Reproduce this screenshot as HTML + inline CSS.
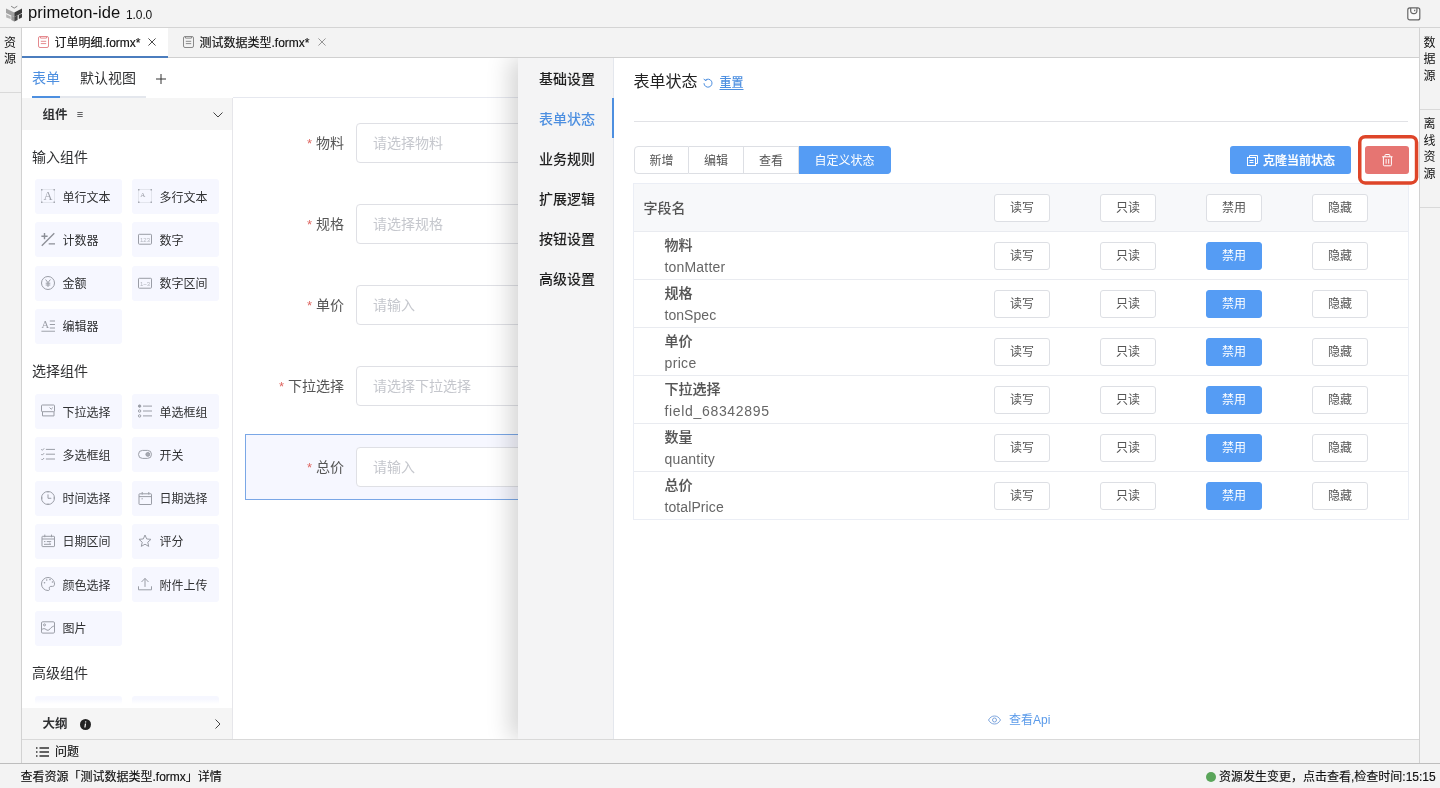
<!DOCTYPE html>
<html lang="zh-CN">
<head>
<meta charset="utf-8">
<title>primeton-ide</title>
<style>
*{box-sizing:border-box;margin:0;padding:0}
html,body{width:1440px;height:788px;overflow:hidden}
body{position:relative;background:#f3f3f3;font-family:"Liberation Sans","Noto Sans CJK SC",sans-serif;color:#000;font-size:12px}
.abs{position:absolute}
.t{position:absolute;white-space:nowrap;line-height:1}
svg{position:absolute;overflow:visible}
.k{-webkit-text-stroke:0.150px #111}
/* title bar */
#titlebar{left:0;top:0;width:1440px;height:28px;background:#f3f3f3;border-bottom:1px solid #d4d4d4}
/* side rails */
#lrail{left:0;top:28px;width:22px;height:736px;background:#f3f3f3;border-right:1px solid #d2d2d2}
#rrail{left:1419px;top:28px;width:21px;height:736px;background:#f3f3f3;border-left:1px solid #d2d2d2}
.vt{position:absolute;width:12px;font-size:12px;line-height:16.200px;text-align:center;color:#111}
/* tab bar */
#tabbar{left:22px;top:28px;width:1397px;height:30px;background:#f3f3f3;border-bottom:1px solid #d0d0d0}
#tab1{left:22px;top:28px;width:146px;height:30px;background:#fff;border-bottom:2px solid #4b7dbe}
/* editor */
#editor{left:22px;top:58px;width:1397px;height:681px;background:#fff}
#subtabs-line{left:32px;top:96px;width:114px;height:2px;background:#e4e7ed}
#subtabs-active{left:32px;top:96px;width:28px;height:2px;background:#4d8fe0}
#comp{left:22px;top:98px;width:211px;height:641px;background:#fff;border-right:1px solid #e6e6ea}
#comp-h{left:22px;top:98px;width:210px;height:32px;background:#f5f5f5}
#outline-h{left:22px;top:708px;width:210px;height:31px;background:#f5f5f5}
.grp{font-size:14px;color:#303133;left:32px}
.ci{position:absolute;width:87px;height:35px;background:#f6f7ff;border-radius:3px}
.ci span{position:absolute;left:27.500px;top:12.500px;font-size:12px;line-height:13px;color:#303133;white-space:nowrap}
.ci svg{left:6px;top:10px;width:14px;height:14px;stroke:#9a9da6;fill:none;stroke-width:1}
/* canvas */
#canvas{left:233px;top:97px;width:290px;height:642px;background:#fff;border-top:1px solid #e6e8ef}
.fl{position:absolute;font-size:14px;line-height:14px;color:#555;text-align:right;width:120px;left:224px;white-space:nowrap}
.fl i{font-style:normal;color:#de6762;margin-right:4px;font-size:13px}
.fi{position:absolute;left:356px;width:200px;height:40px;border:1px solid #dfe0e5;border-radius:4px;background:#fff}
.fi span{position:absolute;left:16px;top:12px;font-size:14px;line-height:15px;color:#c5c7cd;white-space:nowrap}
#sel{left:245px;top:434px;width:300px;height:66px;background:#f6f7ff;border:1px solid #7aa7e6}
/* drawer */
#drawer{left:518px;top:58px;width:901px;height:681px;background:#fff;box-shadow:-8px 0 22px rgba(0,0,0,.17);clip-path:inset(0 0 0 -60px)}
#dnav{left:518px;top:58px;width:96px;height:681px;background:#f4f4f5;border-right:1px solid #e4e7ed}
.dn{position:absolute;left:539px;font-size:14px;line-height:14px;color:#1f1f1f;white-space:nowrap;font-weight:500;margin-top:0.800px}
#dn-bar{left:612px;top:98px;width:2px;height:40px;background:#4d8fe0}
#hr{left:634px;top:121px;width:774px;height:1px;background:#e1e2e6}
.sg{position:absolute;top:146px;height:28px;border:1px solid #dddfe4;border-left:0;background:#fff;font-size:12px;line-height:28px;text-align:center;color:#555}
.btn{position:absolute;width:56px;height:28px;border:1px solid #dddfe4;border-radius:3px;background:#fff;font-size:12px;line-height:27px;text-align:center;color:#555}
.btn.on{background:#559cf4;border-color:#559cf4;color:#fff}
#tbl{left:633px;top:183px;width:776px;height:337px;border:1px solid #ebeef5;background:#fff}
#th{left:634px;top:184px;width:774px;height:47px;background:#f7f8fa}
.rl{position:absolute;left:634px;width:774px;height:1px;background:#e9ebf0}
.fn.cn{left:664.500px;font-weight:500;-webkit-text-stroke:0.120px #555}
.fn{position:absolute;left:664px;font-size:14px;line-height:14px;color:#555;white-space:nowrap}
/* bottom */
#prob{left:22px;top:739px;width:1397px;height:25px;background:#f3f3f3;border-top:1px solid #d9d9d9}
#status{left:0;top:763px;width:1440px;height:25px;background:#f3f3f3;border-top:1px solid #bdbdbd}
</style>
</head>
<body>
<div id="root" style="position:absolute;left:0;top:0;width:1440px;height:788px;will-change:transform">
<!-- TITLE BAR -->
<div id="titlebar" class="abs"></div>
<svg id="logo" style="left:0;top:0;width:28px;height:28px" viewBox="0 0 28 28">
 <path d="M11.100 6.200L14.200 8.100L17.300 6.200" fill="none" stroke="#7a7a7a" stroke-width="0.900"/>
 <path d="M6 8.500L14.200 12.500V17L6 13Z" fill="#a2a2a2"/>
 <path d="M11.300 15.500L14.200 17V21.600L11.300 20.100Z" fill="#9a9a9a"/>
 <path d="M6.200 14.300L10.700 16.500V19L6.200 17.400Z" fill="#b4b4b4"/>
 <path d="M14.300 12.500L22 8.500V13L14.300 17Z" fill="#3a3a3a"/>
 <path d="M14.300 17L17.600 15.300V19.900L14.300 21.600Z" fill="#444"/>
 <path d="M18.800 15L22 13.700V17.500L18.800 19Z" fill="#3a3a3a"/>
</svg>
<div class="t" style="left:28px;top:5px;font-size:16.600px;color:#111">primeton-ide</div>
<div class="t" style="left:126px;top:9px;font-size:12px;color:#111;letter-spacing:-0.100px">1.0.0</div>
<svg style="left:1407px;top:6.500px;width:13.500px;height:13.500px" viewBox="0 0 13.500 13.500" fill="none" stroke="#666" stroke-width="1.200">
 <rect x="0.800" y="0.900" width="12" height="12" rx="2" fill="#fbfbfb"/><path d="M3.700 0.900v3.200a2.600 2.600 0 0 0 2.600 2.600h1a2.600 2.600 0 0 0 2.600-2.600V0.900M7.700 2.800v1.500"/>
</svg>

<!-- RAILS -->
<div id="lrail" class="abs"></div>
<div class="abs" style="left:0;top:92px;width:21px;height:1px;background:#d9d9d9"></div>
<div class="vt" style="left:4px;top:34.900px;line-height:16.400px">资源</div>
<div id="rrail" class="abs"></div>
<div class="vt" style="left:1423.500px;top:35.100px;line-height:16.350px">数据源</div>
<div class="abs" style="left:1420px;top:109px;width:20px;height:1px;background:#d9d9d9"></div>
<div class="vt" style="left:1423.500px;top:116.150px;line-height:16.500px">离线资源</div>
<div class="abs" style="left:1420px;top:207px;width:20px;height:1px;background:#d9d9d9"></div>

<!-- TAB BAR -->
<div id="tabbar" class="abs"></div>
<div id="tab1" class="abs"></div>
<svg style="left:38px;top:36px;width:11px;height:12px" viewBox="0 0 11 12" fill="none" stroke="#e58a8f" stroke-width="1">
 <rect x="0.500" y="0.500" width="10" height="11" rx="1.500"/><path d="M2.500 0.500v1.600h6V0.500M2.800 5.300h5.400M2.800 7.600h5.400"/>
</svg>
<div class="t k" style="left:54.500px;top:37px;font-size:12px;color:#111">订单明细.formx*</div>
<svg style="left:147.500px;top:37.500px;width:8px;height:8px" viewBox="0 0 9 9" stroke="#333" stroke-width="1"><path d="M0.5 0.5l8 8M8.5 0.5l-8 8"/></svg>
<svg style="left:183px;top:36px;width:11px;height:12px" viewBox="0 0 11 12" fill="none" stroke="#8a8a8a" stroke-width="1">
 <rect x="0.500" y="0.500" width="10" height="11" rx="1.500"/><path d="M2.500 0.500v1.600h6V0.500M2.800 5.300h5.400M2.800 7.600h5.400"/>
</svg>
<div class="t k" style="left:199.500px;top:37px;font-size:12px;color:#111">测试数据类型.formx*</div>
<svg style="left:317.500px;top:38px;width:8px;height:8px" viewBox="0 0 9 9" stroke="#888" stroke-width="1"><path d="M0.5 0.5l8 8M8.5 0.5l-8 8"/></svg>

<!-- EDITOR -->
<div id="editor" class="abs"></div>
<div id="subtabs-line" class="abs"></div>
<div id="subtabs-active" class="abs"></div>
<div class="t" style="left:32px;top:71px;font-size:14px;color:#4d8fe0">表单</div>
<div class="t" style="left:80px;top:71px;font-size:14px;color:#303133">默认视图</div>
<svg style="left:156px;top:74px;width:10px;height:10px" viewBox="0 0 10 10" stroke="#333" stroke-width="1"><path d="M5 0v10M0 5h10"/></svg>

<!-- COMPONENT PANEL -->
<div id="comp" class="abs"></div>
<div id="comp-h" class="abs"></div>
<div class="t" style="left:42.500px;top:108.500px;font-size:12.500px;font-weight:700;color:#303133">组件</div>
<div class="t" style="left:76.800px;top:109px;font-size:11px;font-weight:700;color:#303133">≡</div>
<svg style="left:213px;top:112px;width:10px;height:6px" viewBox="0 0 10 6" fill="none" stroke="#444" stroke-width="1"><path d="M0.5 0.5l4.5 4.5l4.5-4.5"/></svg>
<div class="t grp" style="top:149.5px">输入组件</div>
<div class="ci" style="left:35px;top:179.0px"><svg viewBox="0 0 14 14"><rect x="0.5" y="0.5" width="13" height="13" stroke="#b9bcc5" stroke-width="0.6" stroke-dasharray="1 1"/><path d="M0 0h1.500v1.500H0zM12.500 0H14v1.500h-1.500zM0 12.500h1.500V14H0zM12.500 12.500H14V14h-1.500z" fill="#a6a9b2" stroke="none"/><text x="7" y="11.200" font-family="Liberation Serif,serif" font-size="12.500" text-anchor="middle" fill="#9a9da6" stroke="none">A</text></svg><span>单行文本</span></div>
<div class="ci" style="left:132px;top:179.0px"><svg viewBox="0 0 14 14"><rect x="0.5" y="0.5" width="13" height="13" stroke="#b9bcc5" stroke-width="0.6" stroke-dasharray="1 1"/><path d="M0 0h1.500v1.500H0zM12.500 0H14v1.500h-1.500zM0 12.500h1.500V14H0zM12.500 12.500H14V14h-1.500z" fill="#a6a9b2" stroke="none"/><text x="4.800" y="7.600" font-family="Liberation Serif,serif" font-size="7" text-anchor="middle" fill="#9a9da6" stroke="none">A</text></svg><span>多行文本</span></div>
<div class="ci" style="left:35px;top:222.3px"><svg viewBox="0 0 14 14"><g stroke="#8c8f97"><path d="M0.400 4.200h6.200M3.500 1.100v6.200M7.700 11.900h6.300" stroke-width="1.400"/><path d="M13.300 1.200L0.800 13.800" stroke-width="1.300"/></g></svg><span>计数器</span></div>
<div class="ci" style="left:132px;top:222.3px"><svg viewBox="0 0 14 14"><rect x="0.500" y="2.300" width="13" height="9.900" rx="0.800"/><text x="7" y="9.500" font-size="6" text-anchor="middle" stroke="none" fill="#b3b6be" font-family="Liberation Sans,sans-serif">123</text></svg><span>数字</span></div>
<div class="ci" style="left:35px;top:265.6px"><svg viewBox="0 0 14 14"><circle cx="7" cy="7" r="6.500"/><path d="M4.600 3.500L7 6.700L9.400 3.500M7 6.700v4.200M4.700 7.200h4.600M4.700 9h4.600"/></svg><span>金额</span></div>
<div class="ci" style="left:132px;top:265.6px"><svg viewBox="0 0 14 14"><rect x="0.500" y="2.300" width="13" height="9.900" rx="0.800"/><text x="7" y="9.500" font-size="6" text-anchor="middle" stroke="none" fill="#b3b6be" font-family="Liberation Sans,sans-serif">1~3</text></svg><span>数字区间</span></div>
<div class="ci" style="left:35px;top:308.9px"><svg viewBox="0 0 14 14"><text x="4.200" y="8.800" font-family="Liberation Serif,serif" font-size="10.500" text-anchor="middle" fill="#9a9da6" stroke="none">A</text><path d="M8.800 2h5.200M8.800 5.500h5.200M8.800 9h5.200"/><path d="M0.400 12.300H14" stroke="#b3b6be" stroke-width="1.300"/></svg><span>编辑器</span></div>
<div class="t grp" style="top:364.0px">选择组件</div>
<div class="ci" style="left:35px;top:394.0px"><svg viewBox="0 0 14 14"><rect x="0.500" y="1" width="13" height="6.700" rx="0.800"/><path d="M8.600 3.600l1.600 1.600l1.600-1.600M1.500 7.700v4.200h11.500V7.700"/></svg><span>下拉选择</span></div>
<div class="ci" style="left:132px;top:394.0px"><svg viewBox="0 0 14 14"><circle cx="1.600" cy="2.100" r="1.200" fill="#9a9da6"/><circle cx="1.600" cy="7" r="1.200"/><circle cx="1.600" cy="11.900" r="1.200"/><path d="M5 2.100h9M5 7h9M5 11.900h9"/></svg><span>单选框组</span></div>
<div class="ci" style="left:35px;top:437.3px"><svg viewBox="0 0 14 14"><path d="M0.300 2.300l1 1l1.800-1.900M0.300 7.100l1 1l1.800-1.900M0.300 11.900l1 1l1.800-1.900M4.900 2.400H14M4.900 7.200H14M4.900 12H14"/></svg><span>多选框组</span></div>
<div class="ci" style="left:132px;top:437.3px"><svg viewBox="0 0 14 14"><rect x="0.500" y="3.400" width="13" height="8" rx="4"/><circle cx="9.800" cy="7.400" r="1.900" fill="#9a9da6" fill-opacity="0.85"/></svg><span>开关</span></div>
<div class="ci" style="left:35px;top:480.6px"><svg viewBox="0 0 14 14"><circle cx="7" cy="7" r="6.500"/><path d="M7 3.400v3.900h3.300M7 0.700v1M7 12.300v1M0.700 7h1M12.300 7h1"/></svg><span>时间选择</span></div>
<div class="ci" style="left:132px;top:480.6px"><svg viewBox="0 0 14 14"><rect x="1" y="2.800" width="12.500" height="10.700" rx="0.600"/><path d="M1 5.600h12.500M4.200 1v2.600M10.800 1v2.600M3.500 7.800h1.300"/></svg><span>日期选择</span></div>
<div class="ci" style="left:35px;top:523.9px"><svg viewBox="0 0 14 14"><rect x="1" y="2.300" width="12.500" height="10.300" rx="0.600"/><path d="M1 5h12.500M3.800 0.600v2.600M10.500 0.600v2.600M3 7.600h1.400M5.800 7.600h4.400M3 10.300h6.800l-1.500-1.400"/></svg><span>日期区间</span></div>
<div class="ci" style="left:132px;top:523.9px"><svg viewBox="0 0 14 14"><path d="M7.00 1.00L8.70 4.95L12.99 5.35L9.76 8.20L10.70 12.40L7.00 10.20L3.30 12.40L4.24 8.20L1.01 5.35L5.30 4.95Z" stroke-linejoin="round"/></svg><span>评分</span></div>
<div class="ci" style="left:35px;top:567.2px"><svg viewBox="0 0 14 14"><path d="M7 0.500a6.500 6.500 0 0 0 0 13c1.200 0 1.800-0.800 1.400-1.800c-0.500-1.300 0.300-2.300 1.500-2.300h1.600c1.300 0 2-0.900 2-2.200C13.500 3.400 10.600 0.500 7 0.500z"/><g fill="#9a9da6" stroke="none"><circle cx="3.500" cy="5.700" r="0.800"/><circle cx="5.700" cy="3" r="0.800"/><circle cx="9" cy="2.600" r="0.800"/><circle cx="11.500" cy="5" r="0.800"/></g></svg><span>颜色选择</span></div>
<div class="ci" style="left:132px;top:567.2px"><svg viewBox="0 0 14 14"><path d="M0.500 9.300v3.500h13V9.300M7 9.900V1.400M3.500 5L7 1.400L10.500 5"/></svg><span>附件上传</span></div>
<div class="ci" style="left:35px;top:610.5px"><svg viewBox="0 0 14 14"><rect x="0.500" y="0.800" width="13" height="11.300" rx="1.200"/><circle cx="3.500" cy="3.900" r="1"/><path d="M0.500 8.800c1.800-1.500 3.200-1.500 4.500-0.300s2.800 1 4-0.600s3-2.800 4.500-2.900"/></svg><span>图片</span></div>
<div class="t grp" style="top:665.5px">高级组件</div>
<div class="ci" style="left:35px;top:695.5px;height:8px;border-radius:3px 3px 0 0;background:linear-gradient(#f6f7ff 40%,#fff)"></div>
<div class="ci" style="left:132px;top:695.5px;height:8px;border-radius:3px 3px 0 0;background:linear-gradient(#f6f7ff 40%,#fff)"></div>

<div id="outline-h" class="abs"></div>

<!-- CANVAS -->
<div id="canvas" class="abs"></div>
<div id="sel" class="abs"></div>
<div class="fl" style="top:136px"><i>*</i>物料</div><div class="fi" style="top:123px"><span>请选择物料</span></div>
<div class="fl" style="top:217px"><i>*</i>规格</div><div class="fi" style="top:204px"><span>请选择规格</span></div>
<div class="fl" style="top:298px"><i>*</i>单价</div><div class="fi" style="top:285px"><span>请输入</span></div>
<div class="fl" style="top:379px"><i>*</i>下拉选择</div><div class="fi" style="top:366px"><span>请选择下拉选择</span></div>
<div class="fl" style="top:460px"><i>*</i>总价</div><div class="fi" style="top:447px"><span>请输入</span></div>


<!-- DRAWER -->
<div id="drawer" class="abs"></div>
<div id="dnav" class="abs"></div>
<div class="dn" style="top:71px;color:#1f1f1f">基础设置</div>
<div class="dn" style="top:111px;color:#4d8fe0">表单状态</div>
<div class="dn" style="top:151px;color:#1f1f1f">业务规则</div>
<div class="dn" style="top:191px;color:#1f1f1f">扩展逻辑</div>
<div class="dn" style="top:231px;color:#1f1f1f">按钮设置</div>
<div class="dn" style="top:271px;color:#1f1f1f">高级设置</div>
<div id="dn-bar" class="abs"></div>
<div class="t" style="left:633.500px;top:74px;font-size:16px;color:#222">表单状态</div>
<svg style="left:703px;top:77.500px;width:10px;height:10px" viewBox="0 0 10 10" fill="none" stroke="#4d8fe0" stroke-width="1"><path d="M2.200 2.300A4 4 0 1 1 1 5.200M0.800 0.800l1.400 1.700l1.900-0.700"/></svg>
<div class="t" style="left:719.500px;top:77px;font-size:12px;color:#4d8fe0;font-weight:500;text-decoration:underline;text-underline-offset:2px">重置</div>
<div id="hr" class="abs"></div>
<div class="sg" style="left:634px;width:55px;border-left:1px solid #dddfe4;border-radius:4px 0 0 4px;">新增</div>
<div class="sg" style="left:689px;width:55px;">编辑</div>
<div class="sg" style="left:744px;width:55px;">查看</div>
<div class="sg" style="left:799px;width:92px;background:#559cf4;border-color:#559cf4;color:#fff;border-radius:0 4px 4px 0">自定义状态</div>
<div class="abs" style="left:1230px;top:146px;width:121px;height:28px;background:#559cf4;border-radius:3px"></div>
<svg style="left:1246.500px;top:154.500px;width:11px;height:11px" viewBox="0 0 11 11" fill="none" stroke="#fff" stroke-width="1"><path d="M2.500 2.500V0.500h8v8h-2"/><rect x="0.500" y="2.500" width="8" height="8"/><path d="M2.500 5.500h4M2.500 7.500h4"/></svg>
<div class="t" style="left:1263px;top:154.500px;font-size:12px;font-weight:500;color:#fff;-webkit-text-stroke:0.200px #fff">克隆当前状态</div>
<div class="abs" style="left:1365px;top:146px;width:44px;height:28px;background:#e67572;border-radius:3px"></div>
<svg style="left:1381.500px;top:153.500px;width:11px;height:12.500px" viewBox="0 0 11 12.500" fill="none" stroke="#fff" stroke-width="1"><path d="M0.200 2.800h10.400M3 2.800V1.200a0.700 0.700 0 0 1 0.700-0.700h3.400a0.700 0.700 0 0 1 0.700 0.700v1.600M1.400 2.800v8a1 1 0 0 0 1 1h6a1 1 0 0 0 1-1v-8M4.100 5v4.700M6.700 5v4.700"/></svg>
<div id="tbl" class="abs"></div><div id="th" class="abs"></div>
<div class="t" style="left:643.500px;top:201px;font-size:14px;color:#555;font-weight:500">字段名</div>
<div class="btn" style="left:994px;top:194px">读写</div>
<div class="btn" style="left:1100px;top:194px">只读</div>
<div class="btn" style="left:1206px;top:194px">禁用</div>
<div class="btn" style="left:1312px;top:194px">隐藏</div>
<div class="rl" style="top:231px"></div>
<div class="fn cn" style="top:238px">物料</div>
<div class="fn" style="top:260px;left:664.500px;color:#666;letter-spacing:0.18px">tonMatter</div>
<div class="btn" style="left:994px;top:242px">读写</div>
<div class="btn" style="left:1100px;top:242px">只读</div>
<div class="btn on" style="left:1206px;top:242px">禁用</div>
<div class="btn" style="left:1312px;top:242px">隐藏</div>
<div class="rl" style="top:279px"></div>
<div class="fn cn" style="top:286px">规格</div>
<div class="fn" style="top:308px;left:664.500px;color:#666;letter-spacing:0.05px">tonSpec</div>
<div class="btn" style="left:994px;top:290px">读写</div>
<div class="btn" style="left:1100px;top:290px">只读</div>
<div class="btn on" style="left:1206px;top:290px">禁用</div>
<div class="btn" style="left:1312px;top:290px">隐藏</div>
<div class="rl" style="top:327px"></div>
<div class="fn cn" style="top:334px">单价</div>
<div class="fn" style="top:356px;left:664.500px;color:#666;letter-spacing:0.35px">price</div>
<div class="btn" style="left:994px;top:338px">读写</div>
<div class="btn" style="left:1100px;top:338px">只读</div>
<div class="btn on" style="left:1206px;top:338px">禁用</div>
<div class="btn" style="left:1312px;top:338px">隐藏</div>
<div class="rl" style="top:375px"></div>
<div class="fn cn" style="top:382px">下拉选择</div>
<div class="fn" style="top:404px;left:664.500px;color:#666;letter-spacing:0.67px">field_68342895</div>
<div class="btn" style="left:994px;top:386px">读写</div>
<div class="btn" style="left:1100px;top:386px">只读</div>
<div class="btn on" style="left:1206px;top:386px">禁用</div>
<div class="btn" style="left:1312px;top:386px">隐藏</div>
<div class="rl" style="top:423px"></div>
<div class="fn cn" style="top:430px">数量</div>
<div class="fn" style="top:452px;left:664.500px;color:#666;letter-spacing:0.17px">quantity</div>
<div class="btn" style="left:994px;top:434px">读写</div>
<div class="btn" style="left:1100px;top:434px">只读</div>
<div class="btn on" style="left:1206px;top:434px">禁用</div>
<div class="btn" style="left:1312px;top:434px">隐藏</div>
<div class="rl" style="top:471px"></div>
<div class="fn cn" style="top:478px">总价</div>
<div class="fn" style="top:500px;left:664.500px;color:#666;letter-spacing:0.09px">totalPrice</div>
<div class="btn" style="left:994px;top:482px">读写</div>
<div class="btn" style="left:1100px;top:482px">只读</div>
<div class="btn on" style="left:1206px;top:482px">禁用</div>
<div class="btn" style="left:1312px;top:482px">隐藏</div>
<svg style="left:1355px;top:132px;width:68px;height:56px" viewBox="0 0 68 56" fill="none"><rect x="4.750" y="4.750" width="56.800" height="46.200" rx="5.500" stroke="#de4529" stroke-width="3.500"/></svg>
<svg style="left:988px;top:714.500px;width:13px;height:10px" viewBox="0 0 13 10" fill="none" stroke="#7ea6de" stroke-width="1"><path d="M0.500 5C2 2.300 4 1 6.500 1S11 2.300 12.500 5C11 7.700 9 9 6.500 9S2 7.700 0.500 5z"/><circle cx="6.500" cy="5" r="2"/></svg>
<div class="t" style="left:1009px;top:713.700px;font-size:12px;color:#5b9bea">查看Api</div>


<!-- BOTTOM -->
<div id="prob" class="abs"></div>
<div id="status" class="abs"></div>
<svg style="left:36px;top:746.500px;width:13px;height:10px" viewBox="0 0 13 10" stroke="#333" stroke-width="1.300" fill="none"><path d="M0 1h1.500M3.500 1H13M0 5h1.500M3.500 5H13M0 9h1.500M3.500 9H13"/></svg>
<div class="t k" style="left:55px;top:746px;font-size:12px;color:#111">问题</div>
<div class="t k" style="left:20.500px;top:771px;font-size:12px;color:#111">查看资源「测试数据类型.formx」详情</div>
<div class="abs" style="left:1205.500px;top:771.500px;width:10px;height:10px;border-radius:5px;background:#5aa55a"></div>
<div class="t k" style="left:1219px;top:771px;font-size:12px;color:#111">资源发生变更，点击查看,检查时间:15:15</div>
<div class="t" style="left:42.500px;top:717.500px;font-size:12.500px;font-weight:700;color:#303133">大纲</div>
<svg style="left:79.500px;top:718.500px;width:11px;height:11px" viewBox="0 0 11 11"><circle cx="5.500" cy="5.500" r="5.500" fill="#222"/><path d="M5.800 2.300l-0.200 1.200M5.500 4.500l-0.600 4" stroke="#fff" stroke-width="1.200" fill="none"/></svg>
<svg style="left:215px;top:719px;width:6px;height:10px" viewBox="0 0 6 10" fill="none" stroke="#444" stroke-width="1"><path d="M0.500 0.500l4.500 4.500l-4.500 4.500"/></svg>

</div>
</body>
</html>
